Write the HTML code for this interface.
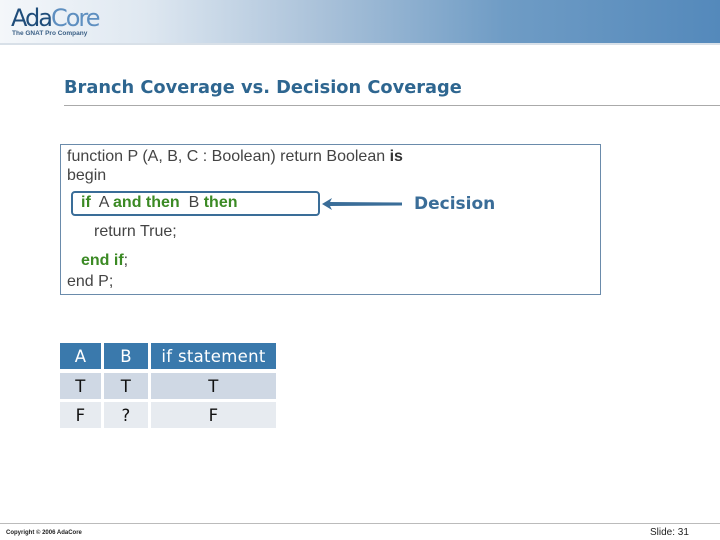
<!DOCTYPE html>
<html><head><style>
body{margin:0;width:720px;height:540px;background:#fff;position:relative;overflow:hidden;font-family:"Liberation Sans",sans-serif}
.hdr{position:absolute;left:0;top:0;width:720px;height:43px;background:linear-gradient(90deg,#f4f7fa 0%,#dfe8f1 20%,#a9c1d9 45%,#6f9cc5 70%,#5489bb 100%);border-bottom:2px solid #d8e0e8}
.logo{position:absolute;left:11px;top:4px;font-family:"DejaVu Sans",sans-serif;font-size:24px;letter-spacing:-2px;color:#2a5e8e}
.logo b{font-weight:normal;color:#1f4d7a}
.logo i{font-style:normal;color:#5e8fc0}
.tag{position:absolute;left:12px;top:30px;font-size:6.5px;font-weight:bold;color:#3a5f85}
.title{position:absolute;left:64px;top:77px;font-family:"DejaVu Sans",sans-serif;font-weight:bold;font-size:17.8px;color:#2e6690}
.tl{position:absolute;left:64px;top:105px;width:656px;height:1px;background:#aaa}
.code{position:absolute;left:60px;top:144px;width:541px;height:151px;border:1px solid #6a8bab;box-sizing:border-box}
.t{position:absolute;font-size:16px;color:#444;white-space:nowrap;letter-spacing:0}
.g{color:#3b8a24;font-weight:bold}
.hl{position:absolute;left:71px;top:191px;width:249px;height:25px;border:2px solid #3a6d98;border-radius:4px;box-sizing:border-box}
.dec{position:absolute;left:414px;top:194px;font-family:"DejaVu Sans",sans-serif;font-weight:bold;font-size:17px;color:#3a6d98}
.c{position:absolute;display:flex;align-items:center;justify-content:center;font-family:"DejaVu Sans",sans-serif;font-size:16.5px;letter-spacing:0.3px;color:#111}
.h{background:#3a79ac;color:#fff}
.r1{background:#cfd8e4}
.r2{background:#e7ebf0}
.fl{position:absolute;left:0;top:523px;width:720px;height:1px;background:#bbb}
</style></head><body>
<div class="hdr"></div>
<div class="logo"><b>Ada</b><i>Core</i></div>
<div class="tag">The GNAT Pro Company</div>
<div class="title">Branch Coverage vs. Decision Coverage</div>
<div class="tl"></div>
<div class="code"></div>
<div class="t" style="left:67px;top:148px">function P (A, B, C : Boolean) return Boolean <b style="color:#333">is</b></div>
<div class="t" style="left:67px;top:167px">begin</div>
<div class="hl"></div>
<div class="t" style="left:81px;top:194px"><span class="g">if</span>&nbsp; A <span class="g">and then</span>&nbsp; B <span class="g">then</span></div>
<svg style="position:absolute;left:320px;top:196px" width="90" height="16"><path d="M2 8 L12 2 L10 6 L82 6.5 L82 9.5 L10 10 L12 14 Z" fill="#3a6d98"/></svg>
<div class="dec">Decision</div>
<div class="t" style="left:94px;top:223px">return True;</div>
<div class="t" style="left:81px;top:252px"><span class="g">end if</span>;</div>
<div class="t" style="left:67px;top:273px">end P;</div>
<div class="c h" style="left:60px;top:343px;width:41px;height:26px">A</div>
<div class="c h" style="left:104px;top:343px;width:44px;height:26px">B</div>
<div class="c h" style="left:151px;top:343px;width:125px;height:26px">if statement</div>
<div class="c r1" style="left:60px;top:373px;width:41px;height:26px">T</div>
<div class="c r1" style="left:104px;top:373px;width:44px;height:26px">T</div>
<div class="c r1" style="left:151px;top:373px;width:125px;height:26px">T</div>
<div class="c r2" style="left:60px;top:402px;width:41px;height:26px">F</div>
<div class="c r2" style="left:104px;top:402px;width:44px;height:26px">?</div>
<div class="c r2" style="left:151px;top:402px;width:125px;height:26px">F</div>
<div class="fl"></div>
<div style="position:absolute;left:6px;top:530px;font-size:6px;font-weight:bold;color:#222">Copyright © 2006 AdaCore</div>
<div style="position:absolute;left:650px;top:527px;font-size:10px;color:#222">Slide: 31</div>
</body></html>
